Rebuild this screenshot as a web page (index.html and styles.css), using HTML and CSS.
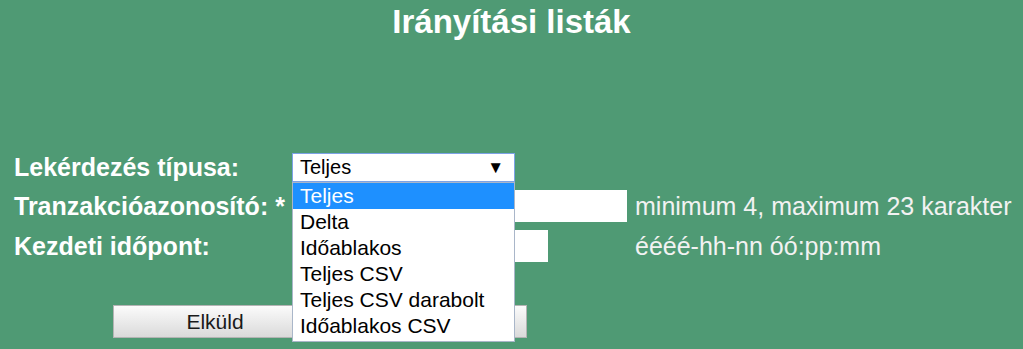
FILE: index.html
```html
<!DOCTYPE html>
<html>
  <head lang="hu">
    <meta charset="UTF-8" />
    <title>Irányítási listák</title>
    <link rel="stylesheet" href="styles.css">
  </head>

  <body>
    <h1 class="title">Irányítási listák</h1>

    <form class="query">
      <div class="rows">
        <label class="label">Lekérdezés típusa:</label>
        <div class="field">
          <div class="select">
            <span>Teljes</span>
            <span class="arrow">&#9660;</span>
          </div>
          <ul class="options">
            <li class="current">Teljes</li>
            <li>Delta</li>
            <li>Időablakos</li>
            <li>Teljes CSV</li>
            <li>Teljes CSV darabolt</li>
            <li>Időablakos CSV</li>
          </ul>
        </div>
        <span></span>

        <label class="label">Tranzakcióazonosító: *</label>
        <div class="field"><input class="input wide" type="text" /></div>
        <span class="hint">minimum 4, maximum 23 karakter</span>

        <label class="label">Kezdeti időpont:</label>
        <div class="field"><input class="input" type="text" /></div>
        <span class="hint">éééé-hh-nn óó:pp:mm</span>
      </div>

      <div class="buttons">
        <button class="btn" type="submit">Elküld</button>
        <button class="btn" type="reset" aria-label="Törlés"></button>
      </div>
    </form>
  </body>
</html>
```

FILE: styles.css
```css
body,
h1,
ul,
li,
form {
  margin: 0;
  padding: 0;
}

ul {
  list-style-type: none;
}

body {
  background: #4f9a74;
  color: #fff;
  font-family: "Liberation Sans", Arial, sans-serif;
  height: 349px;
  overflow: hidden;
}

.title {
  margin-top: 3px;
  font-size: 33px;
  line-height: 38px;
  text-align: center;
  font-weight: 700;
}

.query {
  padding: 112px 0 0 14px;
}

.rows {
  display: grid;
  grid-template-columns: 278px 335px auto;
  grid-template-rows: 29px 32px 32px;
  row-gap: 8px;
  align-items: center;
}

.label {
  font-size: 25px;
  font-weight: 700;
}

.field {
  position: relative;
  height: 100%;
}

.select {
  box-sizing: border-box;
  width: 223px;
  height: 29px;
  padding: 0 10px 0 7px;
  display: flex;
  align-items: center;
  justify-content: space-between;
  background: #fff;
  color: #000;
  border: 1px solid #7da2e6;
  font-size: 20px;
}

.arrow {
  font-size: 17px;
}

.options {
  position: absolute;
  top: 29px;
  left: 0;
  z-index: 2;
  box-sizing: border-box;
  width: 223px;
  padding-bottom: 2px;
  background: #fff;
  color: #000;
  border: 1px solid #a9b6c9;
  font-size: 21px;
  line-height: 26px;
}

.options li {
  padding-left: 7px;
  white-space: nowrap;
}

.options li.current {
  background: #1e90ff;
  color: #fff;
}

.input {
  box-sizing: border-box;
  display: block;
  width: 256px;
  height: 32px;
  border: 0;
  background: #fff;
}

.input.wide {
  width: 335px;
}

.hint {
  padding-left: 8px;
  font-size: 25px;
  color: #f2f2f2;
  white-space: nowrap;
}

.buttons {
  display: flex;
  gap: 3px;
  margin: 43px 0 0 99px;
}

.btn {
  width: 204px;
  height: 33px;
  border: 1px solid #b4b4b4;
  background: linear-gradient(#fbfbfb, #dadada);
  color: #1a1a1a;
  font-family: "Liberation Sans", Arial, sans-serif;
  font-size: 21px;
}

.btn + .btn {
  width: 207px;
}
```
